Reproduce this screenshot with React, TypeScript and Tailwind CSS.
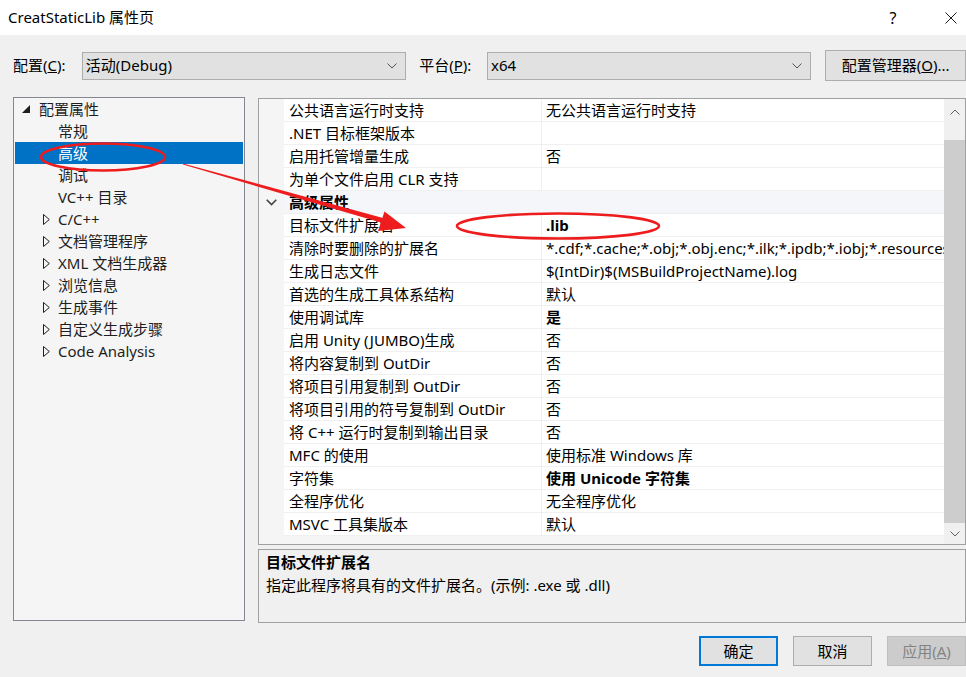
import React from 'react';

type TreeItem = {
  label: string;
  level: 0 | 1;
  arrow?: 'open' | 'closed';
  selected?: boolean;
};

const treeItems: TreeItem[] = [
  { label: '配置属性', level: 0, arrow: 'open' },
  { label: '常规', level: 1 },
  { label: '高级', level: 1, selected: true },
  { label: '调试', level: 1 },
  { label: 'VC++ 目录', level: 1 },
  { label: 'C/C++', level: 1, arrow: 'closed' },
  { label: '文档管理程序', level: 1, arrow: 'closed' },
  { label: 'XML 文档生成器', level: 1, arrow: 'closed' },
  { label: '浏览信息', level: 1, arrow: 'closed' },
  { label: '生成事件', level: 1, arrow: 'closed' },
  { label: '自定义生成步骤', level: 1, arrow: 'closed' },
  { label: 'Code Analysis', level: 1, arrow: 'closed' },
];

type Prop = { name: string; value?: string; bold?: boolean; category?: boolean };

const props: Prop[] = [
  { name: '公共语言运行时支持', value: '无公共语言运行时支持' },
  { name: '.NET 目标框架版本', value: '' },
  { name: '启用托管增量生成', value: '否' },
  { name: '为单个文件启用 CLR 支持', value: '' },
  { name: '高级属性', category: true },
  { name: '目标文件扩展名', value: '.lib', bold: true },
  { name: '清除时要删除的扩展名', value: '*.cdf;*.cache;*.obj;*.obj.enc;*.ilk;*.ipdb;*.iobj;*.resources;*.tlb;*.tli;*.tlh;*.tmp' },
  { name: '生成日志文件', value: '$(IntDir)$(MSBuildProjectName).log' },
  { name: '首选的生成工具体系结构', value: '默认' },
  { name: '使用调试库', value: '是', bold: true },
  { name: '启用 Unity (JUMBO)生成', value: '否' },
  { name: '将内容复制到 OutDir', value: '否' },
  { name: '将项目引用复制到 OutDir', value: '否' },
  { name: '将项目引用的符号复制到 OutDir', value: '否' },
  { name: '将 C++ 运行时复制到输出目录', value: '否' },
  { name: 'MFC 的使用', value: '使用标准 Windows 库' },
  { name: '字符集', value: '使用 Unicode 字符集', bold: true },
  { name: '全程序优化', value: '无全程序优化' },
  { name: 'MSVC 工具集版本', value: '默认' },
];

const Chevron = ({ up = false }: { up?: boolean }) => (
  <svg width="10" height="6" viewBox="0 0 10 6" className={up ? 'rotate-180' : ''}>
    <path d="M0.5 0.5 L5 5 L9.5 0.5" fill="none" stroke="currentColor" strokeWidth="1" />
  </svg>
);

const Dropdown = ({ text }: { text: string }) => (
  <div className="w-[325px] h-[28px] bg-[#e1e1e1] border border-[#adadad] flex items-center justify-between pl-[3px] pr-[8px]">
    <span>{text}</span>
    <span className="text-[#555]">
      <Chevron />
    </span>
  </div>
);

export default function App() {
  return (
    <div className="w-[966px] h-[677px] overflow-hidden relative bg-[#f0f0f0] text-[15px] leading-none text-black font-['Noto_Sans','Noto_Sans_CJK_SC',sans-serif]">
      {/* Title bar */}
      <div className="h-[35px] bg-white flex items-center justify-between pl-[8px]">
        <span>CreatStaticLib 属性页</span>
        <div className="flex items-center">
          <span className="w-[10px] text-center text-[16px] mr-[47px]">?</span>
          <svg width="12" height="12" viewBox="0 0 12 12" className="mr-[9px]">
            <path d="M0.5 0.5 L11.5 11.5 M11.5 0.5 L0.5 11.5" stroke="#1a1a1a" strokeWidth="1" />
          </svg>
        </div>
      </div>

      {/* Config row */}
      <div className="flex items-center h-[31px] mt-[15px] pl-[13px]">
        <span className="w-[69px]">
          配置(<u>C</u>):
        </span>
        <Dropdown text="活动(Debug)" />
        <span className="w-[68px] ml-[13px]">
          平台(<u>P</u>):
        </span>
        <Dropdown text="x64" />
        <div className="ml-[14px] w-[141px] h-[31px] bg-[#e1e1e1] border border-[#adadad] flex items-center justify-center">
          配置管理器(<u>O</u>)...
        </div>
      </div>

      {/* Main area */}
      <div className="flex mt-[16px] pl-[13px]">
        {/* Tree */}
        <div className="w-[233px] h-[524px] bg-[#f5f5f5] border border-[#828790] px-[1px] text-[#1e1e1e]">
          {treeItems.map((item) => (
            <div
              key={item.label}
              className={`h-[22px] flex items-center ${item.selected ? 'bg-[#0072c6] text-white' : ''} ${
                item.level === 0 ? 'pl-[7px]' : item.arrow ? 'pl-[28px]' : 'pl-[43px]'
              }`}
            >
              {item.arrow === 'open' && (
                <span className="w-[17px] flex">
                  <svg width="8" height="8" viewBox="0 0 8 8">
                    <polygon points="8,0 8,8 0,8" fill="#1e1e1e" />
                  </svg>
                </span>
              )}
              {item.arrow === 'closed' && (
                <span className="w-[15px] flex">
                  <svg width="7" height="11" viewBox="0 0 7 11">
                    <polygon points="0.5,0.5 6.3,5.5 0.5,10.5" fill="none" stroke="#1e1e1e" strokeWidth="1" />
                  </svg>
                </span>
              )}
              <span>{item.label}</span>
            </div>
          ))}
        </div>

        {/* Right column */}
        <div className="ml-[13px] mt-[1px] w-[708px] flex flex-col">
          {/* Property grid */}
          <div className="h-[447px] border border-[#a0a0a0] bg-[#f5f5f5] flex">
            <div className="flex-1 min-w-0">
              {props.map((p) =>
                p.category ? (
                  <div key={p.name} className="h-[23px] flex">
                    <div className="w-[25px] flex items-center justify-center text-[#444]">
                      <svg width="11" height="7" viewBox="0 0 11 7">
                        <path d="M0.7 0.7 L5.5 5.5 L10.3 0.7" fill="none" stroke="#444" strokeWidth="1.6" />
                      </svg>
                    </div>
                    <div className="flex-1 bg-[#f4f6fa] border-b border-[#eceef2] flex items-center pl-[5px] font-bold">
                      {p.name}
                    </div>
                  </div>
                ) : (
                  <div key={p.name} className="h-[23px] flex">
                    <div className="w-[25px]" />
                    <div className="flex-1 min-w-0 flex bg-white border-b border-[#f0f0f0]">
                      <div className="w-[258px] shrink-0 border-r border-[#f0f0f0] flex items-center pl-[5px] whitespace-nowrap">
                        {p.name}
                      </div>
                      <div
                        className={`flex-1 min-w-0 overflow-hidden whitespace-nowrap flex items-center pl-[4px] ${
                          p.bold ? 'font-bold' : ''
                        }`}
                      >
                        {p.value}
                      </div>
                    </div>
                  </div>
                )
              )}
            </div>
            {/* Scrollbar */}
            <div className="w-[21px] shrink-0 bg-[#f0f0f0] flex flex-col">
              <div className="h-[41px] flex justify-center pt-[10px] text-[#606060]">
                <Chevron up />
              </div>
              <div className="flex-1 bg-[#cdcdcd]" />
              <div className="h-[21px] flex items-center justify-center text-[#606060]">
                <Chevron />
              </div>
            </div>
          </div>

          {/* Description */}
          <div className="mt-[4px] h-[74px] border border-[#a0a0a0] pl-[7px] pt-[4px]">
            <div className="font-bold h-[17px] flex items-center">目标文件扩展名</div>
            <div className="mt-[6px] h-[17px] flex items-center">指定此程序将具有的文件扩展名。(示例: .exe 或 .dll)</div>
          </div>
        </div>
      </div>

      {/* Buttons */}
      <div className="flex mt-[13px] pl-[699px] gap-[15px]">
        <div className="w-[79px] h-[30px] bg-[#e1e1e1] border-2 border-[#0078d7] flex items-center justify-center">确定</div>
        <div className="w-[79px] h-[30px] bg-[#e1e1e1] border border-[#adadad] flex items-center justify-center">取消</div>
        <div className="w-[79px] h-[30px] shrink-0 bg-[#cccccc] border border-[#bfbfbf] text-[#838383] flex items-center justify-center">
          应用(<u>A</u>)
        </div>
      </div>

      {/* Red annotation marks */}
      <svg className="absolute inset-0 pointer-events-none" width="966" height="677" viewBox="0 0 966 677">
        <ellipse cx="103" cy="157" rx="62" ry="13.5" fill="none" stroke="#ee1c1c" strokeWidth="2.6" />
        <ellipse cx="558" cy="226" rx="101" ry="12.5" fill="none" stroke="#ee1c1c" strokeWidth="2.6" />
        <polygon points="183,163.4 383,218 381.6,222.8 183,164.6" fill="#ee1c1c" />
        <polygon points="406,228 384.5,211.5 378,231" fill="#ee1c1c" />
      </svg>
    </div>
  );
}
